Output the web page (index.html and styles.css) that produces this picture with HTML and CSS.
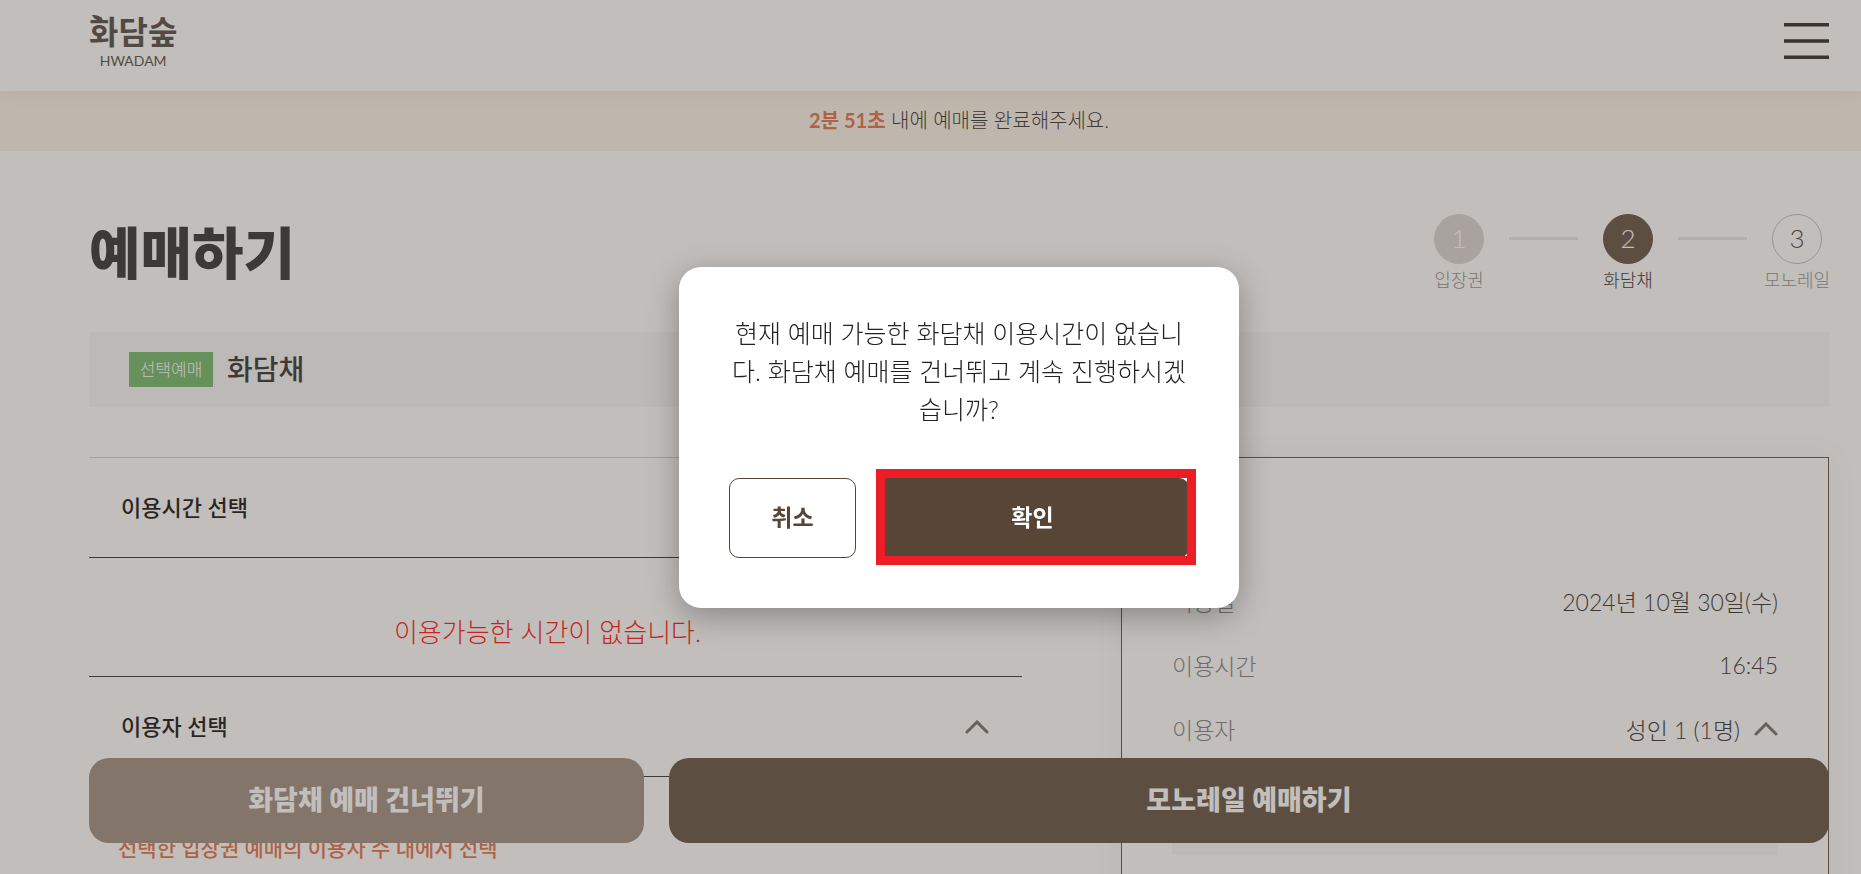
FILE: index.html
```
<!DOCTYPE html>
<html lang="ko">
<head>
<meta charset="UTF-8">
<meta name="viewport" content="width=device-width, initial-scale=1">
<title>화담숲 예매하기</title>
<link rel="stylesheet" href="styles.css">
</head>
<body class="modal-open">

<header class="header">
    <a href="#" class="logo">
        <svg class="logo-leaf" width="11" height="6" viewBox="0 0 11 6" aria-hidden="true"><path d="M0 0C5 0 9 1 11 5C7 6 2 5 0 0Z" fill="currentColor"/></svg>
        <span class="logo-ko">화담숲</span>
        <span class="logo-en">HWADAM</span>
    </a>
    <button type="button" class="menu-btn" aria-label="메뉴 열기">
        <svg width="45" height="36" viewBox="0 0 45 36" fill="none" stroke="currentColor" stroke-width="3.6"><path d="M0 1.8H45M0 18H45M0 34.2H45"/></svg>
    </button>
</header>

<p class="timer"><strong>2분 51초</strong> 내에 예매를 완료해주세요.</p>

<main class="container">
    <div class="page-top">
        <h1>예매하기</h1>
        <ol class="steps">
            <li class="step done"><span class="num">1</span><span class="name">입장권</span></li>
            <li class="step on"><span class="num">2</span><span class="name">화담채</span></li>
            <li class="step"><span class="num">3</span><span class="name">모노레일</span></li>
        </ol>
    </div>

    <div class="product">
        <span class="badge">선택예매</span>
        <h2>화담채</h2>
    </div>

    <div class="columns">
        <div class="select-area">
            <section>
                <div class="acc-head"><h3>이용시간 선택</h3></div>
                <p class="no-time">이용가능한 시간이 없습니다.</p>
            </section>
            <section>
                <div class="acc-head">
                    <h3>이용자 선택</h3>
                    <button type="button" class="toggle" aria-label="이용자 선택 접기">
                        <svg width="24" height="14" viewBox="0 0 24 14" fill="none" stroke="currentColor" stroke-width="3" stroke-linecap="round"><path d="M2 12L12 2L22 12"/></svg>
                    </button>
                </div>
                <p class="guide">선택한 입장권 예매의 이용자 수 내에서 선택</p>
            </section>
        </div>

        <aside class="summary">
            <dl>
                <div class="row"><dt>이용일</dt><dd>2024년 10월 30일(수)</dd></div>
                <div class="row"><dt>이용시간</dt><dd>16:45</dd></div>
                <div class="row">
                    <dt>이용자</dt>
                    <dd>성인 1 (1명)
                        <button type="button" class="toggle" aria-label="이용자 내역 접기">
                            <svg width="24" height="14" viewBox="0 0 24 14" fill="none" stroke="currentColor" stroke-width="3" stroke-linecap="round"><path d="M2 12L12 2L22 12"/></svg>
                        </button>
                    </dd>
                </div>
            </dl>
            <div class="detail"></div>
        </aside>
    </div>
</main>

<div class="bottom-bar">
    <button type="button" class="btn-skip">화담채 예매 건너뛰기</button>
    <button type="button" class="btn-next">모노레일 예매하기</button>
</div>

<div class="overlay">
    <div class="modal" role="dialog" aria-modal="true" aria-labelledby="modal-msg">
        <p id="modal-msg">현재 예매 가능한 화담채 이용시간이 없습니다. 화담채 예매를 건너뛰고 계속 진행하시겠습니까?</p>
        <div class="modal-btns">
            <button type="button" class="btn-cancel">취소</button>
            <button type="button" class="btn-ok">확인</button>
        </div>
    </div>
</div>

</body>
</html>
```
FILE: styles.css
```
* {
    margin: 0;
    padding: 0;
    box-sizing: border-box;
}
body {
    font-family: Lato, "Noto Sans CJK KR", sans-serif;
    font-weight: 300;
    color: #222;
    background: #fff;
}
body.modal-open {
    height: 100vh;
    overflow: hidden;
}
button {
    font: inherit;
    color: inherit;
    border: 0;
    background: none;
    cursor: pointer;
}
ol {
    list-style: none;
}
svg {
    display: block;
}

/* header */
.header {
    position: relative;
    display: flex;
    justify-content: space-between;
    align-items: center;
    height: 91px;
    padding: 0 32px 9px 89px;
    background: #fff;
    box-shadow: 0 0 20px rgba(0, 0, 0, 0.1);
}
.logo {
    position: relative;
    display: flex;
    flex-direction: column;
    align-items: center;
    color: #443f3a;
    text-decoration: none;
}
.logo-leaf {
    position: absolute;
    top: 3px;
    left: 3px;
}
.logo-ko {
    font-size: 32px;
    font-weight: 700;
    line-height: 40px;
}
.logo-en {
    font-size: 14px;
    font-weight: 400;
    line-height: 18px;
}
.menu-btn {
    color: #1f1a16;
}

.timer {
    height: 60px;
    padding: 0 32px 0 89px;
    background: #fbf3e8;
    font-size: 20px;
    line-height: 58px;
    text-align: center;
}
.timer strong {
    font-weight: 700;
    color: #dd683a;
}

.container {
    padding: 0 32px 0 89px;
}
.page-top {
    display: flex;
    justify-content: space-between;
    align-items: flex-start;
    height: 181px;
    padding-top: 63px;
}
h1 {
    font-size: 56px;
    font-weight: 900;
    line-height: 78px;
}

/* steps */
.steps {
    display: flex;
}
.step {
    display: flex;
    flex-direction: column;
    align-items: center;
    position: relative;
    width: 64px;
    color: #333;
    white-space: nowrap;
}
.step + .step {
    margin-left: 105px;
}
.step + .step::before {
    content: "";
    position: absolute;
    top: 23px;
    left: -87px;
    width: 69px;
    height: 3px;
    background: #e9e7e5;
}
.num {
    width: 50px;
    height: 50px;
    border: 1px solid #bbb;
    border-radius: 50%;
    font-size: 26px;
    line-height: 46px;
    text-align: center;
}
.name {
    font-size: 18px;
    line-height: 32px;
    color: #888;
}
.done .num {
    background: #d6d3d0;
    border-color: #d6d3d0;
    color: #fff;
}
.on .num {
    background: #574536;
    border-color: #574536;
    color: #fff;
}
.on .name {
    color: #222;
}

.product {
    display: flex;
    align-items: center;
    gap: 14px;
    height: 75px;
    padding: 0 40px;
    background: #f7f7f7;
}
.badge {
    width: 84px;
    height: 35px;
    background: #67b45f;
    color: #fff;
    font-size: 17px;
    line-height: 35px;
    text-align: center;
}
h2 {
    padding-bottom: 2px;
    font-size: 28px;
    font-weight: 500;
    line-height: 40px;
}

.columns {
    display: grid;
    grid-template-columns: 933fr 708fr;
    align-items: start;
    gap: 99px;
    margin-top: 50px;
}
.select-area {
    border-top: 1px solid #ccc;
}
.acc-head {
    display: flex;
    justify-content: space-between;
    align-items: center;
    height: 100px;
    padding: 0 33px 0 32px;
    border-bottom: 1px solid #222;
}
h3 {
    padding-bottom: 4px;
    font-size: 22px;
    font-weight: 500;
    color: #000;
}
.no-time {
    height: 119px;
    padding: 14px 16px 0 0;
    border-bottom: 1px solid #222;
    font-size: 26px;
    line-height: 120px;
    color: #f00;
    text-align: center;
    overflow: hidden;
}
.toggle {
    color: #69655f;
}
.guide {
    padding: 54px 29px;
    font-size: 21px;
    font-weight: 500;
    line-height: 34px;
    color: #dd683a;
}

.summary {
    min-height: 600px;
    padding: 111px 50px 50px;
    border: 1px solid #574536;
    box-shadow: 0 0 30px rgba(0, 0, 0, 0.06);
}
.row {
    display: flex;
    justify-content: space-between;
    align-items: center;
    height: 64px;
    font-size: 23px;
}
dt {
    color: #777;
}
dd {
    display: flex;
    align-items: center;
    gap: 14px;
}
.detail {
    height: 94px;
    background: #f7f7f7;
}

.bottom-bar {
    position: fixed;
    left: 89px;
    right: 32px;
    bottom: 31px;
    display: flex;
    gap: 25px;
}
.bottom-bar button {
    height: 85px;
    padding-bottom: 4px;
    border-radius: 20px;
    color: #fff;
    font-size: 27px;
    font-weight: 900;
}
.bottom-bar .btn-skip {
    flex: 11;
    background: #968578;
}
.bottom-bar .btn-next {
    flex: 23;
    background: #574536;
}

/* modal */
.overlay {
    position: fixed;
    inset: 0;
    display: flex;
    justify-content: center;
    align-items: center;
    padding-left: 57px;
    background: rgba(102, 92, 86, 0.4);
}
.modal {
    width: 560px;
    padding: 47px 50px 50px;
    border-radius: 22px;
    background: #fff;
    box-shadow: 0 8px 32px rgba(0, 0, 0, 0.3);
}
.modal p {
    font-size: 25px;
    line-height: 38px;
    text-align: center;
    word-break: break-all;
}
.modal-btns {
    display: flex;
    gap: 20px;
    margin-top: 50px;
}
.modal-btns button {
    height: 80px;
    padding-bottom: 4px;
    border: 1px solid #574536;
    border-radius: 10px;
    font-size: 23px;
    font-weight: 700;
}
.btn-cancel {
    width: 127px;
    color: #574536;
}
.btn-ok {
    position: relative;
    flex: 1;
    background: #574536;
    color: #fff;
}
/* red frame round the confirm button */
.btn-ok::after {
    content: "";
    position: absolute;
    inset: -10px -8px -8px -1px;
    border: 9px solid #ee1c24;
}
```
